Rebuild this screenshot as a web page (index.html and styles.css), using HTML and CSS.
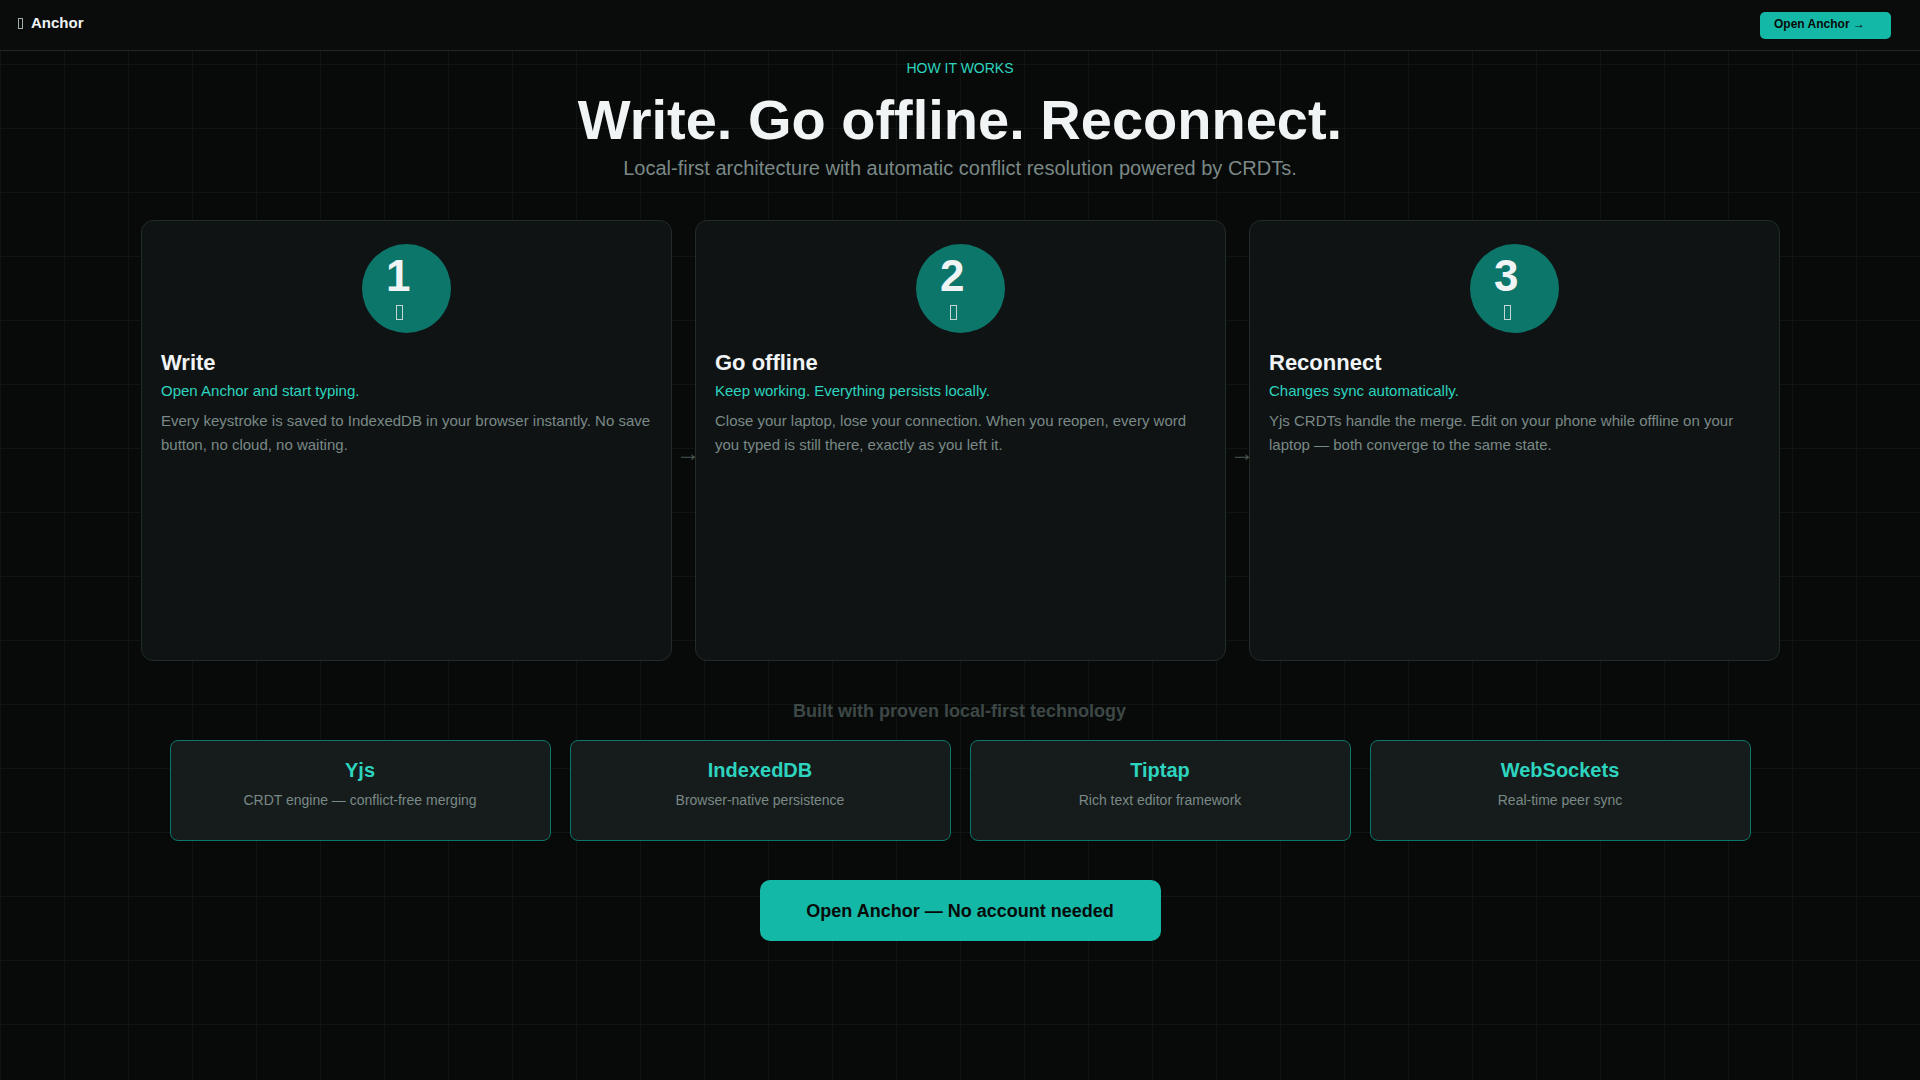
FILE: index.html
```html
<!DOCTYPE html>
<html lang="en">
<head>
  <meta charset="UTF-8">
  <meta name="viewport" content="width=device-width, initial-scale=1.0">
  <title>Anchor - How it works</title>
  <link rel="stylesheet" href="styles.css">
</head>
<body>

  <nav class="nav">
    <div class="brand"><span class="glyph"></span>Anchor</div>
    <a class="nav-btn">Open Anchor →</a>
  </nav>

  <main>
    <header class="hero">
      <p class="eyebrow">HOW IT WORKS</p>
      <h1>Write. Go offline. Reconnect.</h1>
      <p class="subtitle">Local-first architecture with automatic conflict resolution powered by CRDTs.</p>
    </header>

    <section class="steps">
      <div class="step">
        <div class="badge"><span class="num">1</span><span class="glyph"></span></div>
        <h2>Write</h2>
        <p class="lede">Open Anchor and start typing.</p>
        <p class="desc">Every keystroke is saved to IndexedDB in your browser instantly. No save<br>button, no cloud, no waiting.</p>
      </div>
      <div class="arrow">→</div>
      <div class="step">
        <div class="badge"><span class="num">2</span><span class="glyph"></span></div>
        <h2>Go offline</h2>
        <p class="lede">Keep working. Everything persists locally.</p>
        <p class="desc">Close your laptop, lose your connection. When you reopen, every word<br>you typed is still there, exactly as you left it.</p>
      </div>
      <div class="arrow">→</div>
      <div class="step">
        <div class="badge"><span class="num">3</span><span class="glyph"></span></div>
        <h2>Reconnect</h2>
        <p class="lede">Changes sync automatically.</p>
        <p class="desc">Yjs CRDTs handle the merge. Edit on your phone while offline on your<br>laptop — both converge to the same state.</p>
      </div>
    </section>

    <h3 class="tech-title">Built with proven local-first technology</h3>
    <section class="tech">
      <div class="tech-card">
        <h4>Yjs</h4>
        <p>CRDT engine — conflict-free merging</p>
      </div>
      <div class="tech-card">
        <h4>IndexedDB</h4>
        <p>Browser-native persistence</p>
      </div>
      <div class="tech-card">
        <h4>Tiptap</h4>
        <p>Rich text editor framework</p>
      </div>
      <div class="tech-card">
        <h4>WebSockets</h4>
        <p>Real-time peer sync</p>
      </div>
    </section>

    <a class="cta">Open Anchor — No account needed</a>
  </main>

</body>
</html>
```
FILE: styles.css
```css
* {
  box-sizing: border-box;
  margin: 0;
  padding: 0;
}
body {
  font-family: "Liberation Sans", Arial, sans-serif;
  color: #f0f4f5;
  min-height: 1080px;
  overflow: hidden;
  background-color: #080a09;
  background-image:
    linear-gradient(to right, #101413 1px, transparent 1px),
    linear-gradient(to bottom, #101413 1px, transparent 1px);
  background-size: 64px 64px;
}
.nav {
  display: flex;
  justify-content: space-between;
  align-items: flex-start;
  height: 51px;
  padding: 12px 29px 0 18px;
  background-color: #090c0b;
  border-bottom: 1px solid #1f2a28;
}
.brand {
  display: flex;
  align-items: center;
  gap: 8px;
  margin-top: 2px;
  font-size: 15px;
  font-weight: bold;
  line-height: 18px;
}
/* empty box where the emoji would be */
.glyph {
  width: 5px;
  height: 11px;
  border: 1px solid #9fb0ae;
}
.nav-btn {
  width: 131px;
  height: 27px;
  padding-left: 14px;
  border-radius: 5px;
  background-color: #14b8a6;
  color: #080a09;
  font-size: 12px;
  font-weight: bold;
  line-height: 24px;
}
main {
  display: flex;
  flex-direction: column;
  align-items: center;
}
.hero {
  padding-top: 9px;
  text-align: center;
}
.eyebrow {
  color: #2dd4bf;
  font-size: 14px;
  line-height: 16px;
}
h1 {
  margin-top: 12px;
  font-size: 56px;
  line-height: 64px;
}
.subtitle {
  margin-top: 4px;
  color: #7a8987;
  font-size: 20px;
  line-height: 24px;
}
.steps {
  display: flex;
  margin-top: 40px;
  padding-left: 1px;
}
.step {
  position: relative;
  width: 531px;
  height: 441px;
  padding: 23px 19px;
  background-color: #0f1313;
  border: 1px solid #222c2a;
  border-radius: 12px;
}
.badge {
  display: flex;
  flex-direction: column;
  width: 89px;
  height: 89px;
  margin: 0 auto;
  padding: 9px 0 0 24px;
  border-radius: 50%;
  background-color: #0d766a;
}
.num {
  font-size: 44px;
  font-weight: bold;
  line-height: 46px;
}
.badge .glyph {
  width: 7px;
  height: 15px;
  margin: 6px 0 0 10px;
  border-color: #c3d6d4;
}
h2 {
  margin-top: 17px;
  font-size: 22px;
  line-height: 26px;
}
.lede {
  margin-top: 6px;
  color: #2dd4bf;
  font-size: 15px;
  line-height: 18px;
}
.desc {
  margin-top: 9px;
  color: #7a8987;
  font-size: 15px;
  line-height: 24px;
  white-space: nowrap;
}
/* the next card covers the arrow tip */
.arrow {
  width: 23px;
  padding: 221px 0 0 4px;
  color: #4a5654;
  font-size: 24px;
  line-height: 24px;
}
.tech-title {
  margin-top: 40px;
  padding-right: 1px;
  color: #3d4846;
  font-size: 18px;
  line-height: 20px;
}
.tech {
  display: flex;
  gap: 19px;
  margin-top: 19px;
  padding-left: 1px;
}
.tech-card {
  width: 381px;
  height: 101px;
  padding: 17px 1px 0 0;
  text-align: center;
  background-color: #161c1b;
  border: 1px solid #0d766a;
  border-radius: 8px;
}
.tech-card h4 {
  color: #2dd4bf;
  font-size: 20px;
  line-height: 24px;
}
.tech-card p {
  margin-top: 9px;
  color: #7a8987;
  font-size: 14px;
  line-height: 18px;
}
.cta {
  width: 401px;
  height: 61px;
  margin-top: 39px;
  margin-left: 1px;
  padding-right: 1px;
  border-radius: 10px;
  background-color: #14b8a6;
  color: #080a09;
  font-size: 18px;
  font-weight: bold;
  line-height: 62px;
  text-align: center;
}
```
